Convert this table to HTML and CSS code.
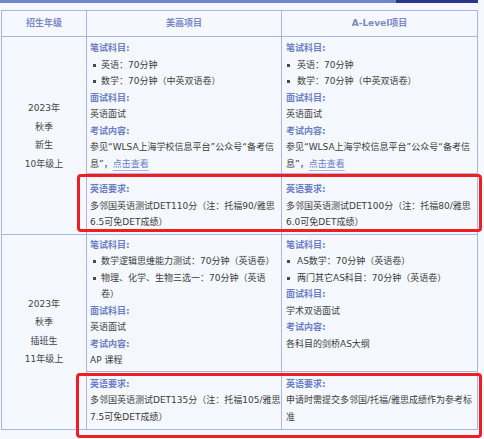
FILE: index.html
```html
<!DOCTYPE html>
<html lang="zh-CN">
<head>
<meta charset="utf-8">
<title>招生项目</title>
<link rel="stylesheet" href="styles.css">
</head>
<body>
<div class="page">
  <div class="topbar"><span class="bar-a"></span><span class="bar-b"></span></div>
  <div class="sheet">
    <table class="admit">
      <colgroup><col class="c1"><col class="c2"><col class="c3"></colgroup>
      <thead>
        <tr><th>招生年级</th><th>美高项目</th><th>A-Level项目</th></tr>
      </thead>
      <tbody>
        <tr class="main first">
          <td rowspan="2" class="grade"><p>2023年</p><p>秋季</p><p>新生</p><p>10年级上</p></td>
          <td class="us">
            <p class="lbl">笔试科目:</p>
            <ul><li>英语：70分钟</li><li>数学：70分钟（中英双语卷）</li></ul>
            <p class="lbl">面试科目:</p>
            <p>英语面试</p>
            <p class="lbl">考试内容:</p>
            <p>参见“WLSA上海学校信息平台”公众号“备考信息”，<a class="lk">点击查看</a></p>
          </td>
          <td class="al">
            <p class="lbl">笔试科目:</p>
            <ul><li>英语：70分钟</li><li>数学：70分钟（中英双语卷）</li></ul>
            <p class="lbl">面试科目:</p>
            <p>英语面试</p>
            <p class="lbl">考试内容:</p>
            <p>参见“WLSA上海学校信息平台”公众号“备考信息”，<a class="lk">点击查看</a></p>
          </td>
        </tr>
        <tr class="req first">
          <td class="us"><p class="lbl">英语要求:</p><p>多邻国英语测试DET110分（注：托福90/雅思6.5可免DET成绩）</p></td>
          <td class="al"><p class="lbl">英语要求:</p><p>多邻国英语测试DET100分（注：托福80/雅思6.0可免DET成绩）</p></td>
        </tr>
        <tr class="main second">
          <td rowspan="2" class="grade"><p>2023年</p><p>秋季</p><p>插班生</p><p>11年级上</p></td>
          <td class="us">
            <p class="lbl">笔试科目:</p>
            <ul><li>数学逻辑思维能力测试：70分钟（英语卷）</li><li>物理、化学、生物三选一：70分钟（英语卷）</li></ul>
            <p class="lbl">面试科目:</p>
            <p>英语面试</p>
            <p class="lbl">考试内容:</p>
            <p>AP 课程</p>
          </td>
          <td class="al">
            <p class="lbl">笔试科目:</p>
            <ul><li>AS数学：70分钟（英语卷）</li><li>两门其它AS科目：70分钟（英语卷）</li></ul>
            <p class="lbl">面试科目:</p>
            <p>学术双语面试</p>
            <p class="lbl">考试内容:</p>
            <p>各科目的剑桥AS大纲</p>
          </td>
        </tr>
        <tr class="req second">
          <td class="us"><p class="lbl">英语要求:</p><p>多邻国英语测试DET135分（注：托福105/雅思7.5可免DET成绩）</p></td>
          <td class="al"><p class="lbl">英语要求:</p><p>申请时需提交多邻国/托福/雅思成绩作为参考标准</p></td>
        </tr>
      </tbody>
    </table>
    <div class="mark mark-1"></div>
    <div class="mark mark-2"></div>
  </div>
</div>
</body>
</html>
```

FILE: styles.css
```css
html, body {
  margin: 0;
  padding: 0;
  background: #f5f8fe;
}
body {
  font-family: "DejaVu Sans", "Noto Sans CJK SC", sans-serif;
  font-size: 9px;
  color: #3c3c3c;
  text-spacing-trim: space-all;
}
.page {
  width: 484px;
  height: 439px;
  overflow: hidden;
}
.topbar {
  display: flex;
  width: 478px;
  height: 3px;
}
.bar-a { flex: 0 0 396px; background: #6f86c8; }
.bar-b { flex: 1 1 auto; background: #2c348e; }

.sheet {
  position: relative;
  margin-top: 7px;
  padding-left: 1px;
}
.admit {
  border-collapse: separate;
  border-spacing: 0;
  table-layout: fixed;
  width: 477px;
  border-top: 1px solid #a9b6e6;
  border-left: 1px solid #a9b6e6;
}
.c1 { width: 85px; }
.c2 { width: 195px; }
.c3 { width: 196px; }
.admit th,
.admit td {
  border-right: 1px solid #a9b6e6;
  border-bottom: 1px solid #a9b6e6;
  text-align: left;
  vertical-align: top;
  line-height: 16.5px;
}
.admit td.us { padding-left: 3px; padding-right: 0; }
.admit td.al { padding-left: 4px; padding-right: 2px; }
.admit th {
  height: 25px;
  line-height: 25px;
  text-align: center;
  color: #7b88c8;
  font-weight: 700;
  padding: 0;
}
.admit p { margin: 0; }
.admit ul { margin: 0; padding: 0; list-style: none; }
.admit li { display: flex; }
.admit li::before {
  content: "";
  flex: none;
  width: 3px;
  height: 3px;
  background: #4a4a4a;
  margin: 7px 5px 0 3px;
}
.admit td.al li::before { margin-left: 1px; margin-right: 7px; }
.lbl { color: #6c7fc6; font-weight: 600; }
.lk {
  color: #6b7dc8;
  text-decoration: underline;
  text-decoration-color: #a6b2e2;
  text-underline-offset: 3px;
}
.admit td.grade {
  text-align: center;
  vertical-align: middle;
  line-height: 18.4px;
  padding: 0;
  color: #444;
}
.main.first td { padding-top: 3px; padding-bottom: 1px; }
.req.first td { padding-top: 7px; padding-bottom: 3px; }
.main.second td { padding-top: 2px; padding-bottom: 2px; }
.req.second td { padding-top: 4px; padding-bottom: 4px; }

.mark {
  position: absolute;
  border: 3px solid #ee1f22;
  border-radius: 4px;
  box-sizing: border-box;
}
.mark-1 { left: 77px; top: 164px; width: 405px; height: 58px; }
.mark-2 { left: 76px; top: 363px; width: 406px; height: 65px; }
```
